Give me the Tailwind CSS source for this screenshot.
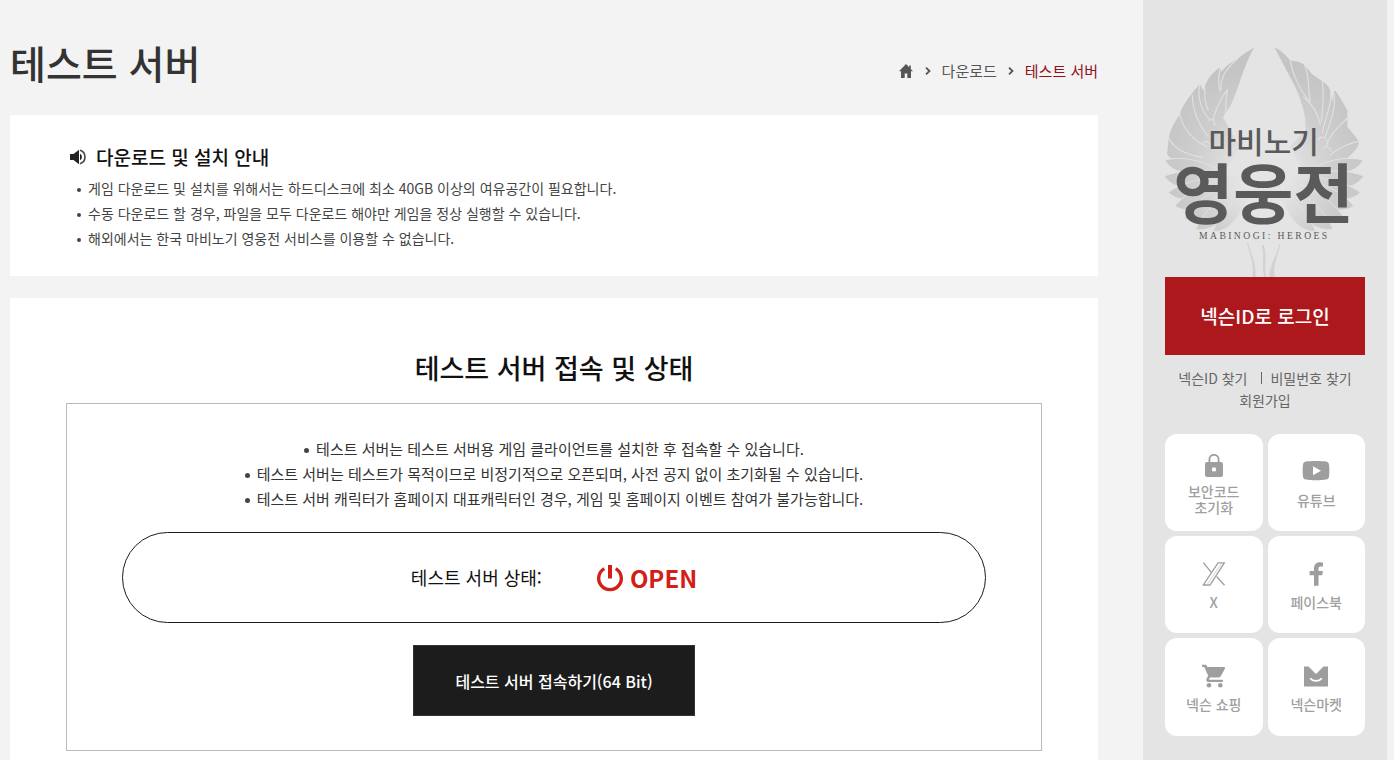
<!DOCTYPE html>
<html lang="ko">
<head>
    <meta charset="UTF-8">
    <meta name="viewport" content="width=device-width, initial-scale=1.0">
    <title>테스트 서버 - 마비노기 영웅전</title>

    <!-- Tailwind CSS -->
    <script src="https://cdn.jsdelivr.net/npm/@tailwindcss/browser@4"></script>
</head>
<body class="flex min-h-screen bg-[#f3f3f3] text-[#333] font-['Noto_Sans_CJK_KR','Noto_Sans',sans-serif]">

    <main class="flex flex-1 flex-col pl-[10px] pr-[45px]">

        <header class="flex items-end justify-between pt-[33px] pb-6">
            <h1 class="text-[39px] leading-[58px] font-medium">테스트 서버</h1>
            <nav aria-label="현재 위치" class="mb-2 flex items-center text-[15px] leading-6 text-[#555]">
                <a href="#" aria-label="홈">
                    <svg class="size-4" viewBox="0 0 16 16" fill="#555"><path d="M8 1 1 8.200h2V15h3.700v-4.500h2.600V15H13V8.200h2L12.800 6V2.500h-1.600v1.800z"/></svg>
                </a>
                <svg class="mx-[11px] h-2 w-[6px]" viewBox="0 0 6 8" fill="none" stroke="#555" stroke-width="1.800"><path d="m1 .7 3.500 3.300L1 7.300"/></svg>
                <a href="#">다운로드</a>
                <svg class="mx-[11px] h-2 w-[6px]" viewBox="0 0 6 8" fill="none" stroke="#555" stroke-width="1.800"><path d="m1 .7 3.500 3.300L1 7.300"/></svg>
                <a href="#" class="text-[#90101c]">테스트 서버</a>
            </nav>
        </header>

        <!-- 설치 안내 -->
        <section class="bg-white px-[60px] pt-[27px] pb-[25px]">
            <h2 class="flex items-center gap-[10px] text-[19px] leading-[30px] font-medium text-[#111]">
                <svg class="size-4" viewBox="0 0 16 16" fill="#222"><path d="M0 5v6h3.500L9 15.200V.8L3.500 5z"/><path d="M10 4.800a3.600 3.600 0 0 1 0 6.400z"/><path d="M10 1.300a7 7 0 0 1 0 13.400" fill="none" stroke="#444" stroke-width="1.600"/></svg>
                다운로드 및 설치 안내
            </h2>
            <ul class="mt-1 pl-[7px] text-[14px] leading-[25px] text-[#444]">
                <li class="flex items-center gap-[7px]"><span class="mt-[2px] size-1 rounded-full bg-[#444]"></span>게임 다운로드 및 설치를 위해서는 하드디스크에 최소 40GB 이상의 여유공간이 필요합니다.</li>
                <li class="flex items-center gap-[7px]"><span class="mt-[2px] size-1 rounded-full bg-[#444]"></span>수동 다운로드 할 경우, 파일을 모두 다운로드 해야만 게임을 정상 실행할 수 있습니다.</li>
                <li class="flex items-center gap-[7px]"><span class="mt-[2px] size-1 rounded-full bg-[#444]"></span>해외에서는 한국 마비노기 영웅전 서비스를 이용할 수 없습니다.</li>
            </ul>
        </section>

        <!-- 서버 상태 -->
        <section class="mt-[22px] flex-1 bg-white px-14 pt-[50px]">
            <h2 class="text-center text-[27px] leading-10 font-medium text-[#111]">테스트 서버 접속 및 상태</h2>
            <div class="mt-[15px] flex flex-col border border-[#bbb] px-[55px] pt-8 pb-[34px]">
                <ul class="text-[15px] leading-[25px]">
                    <li class="flex items-center justify-center gap-[7px]"><span class="mt-1 size-[5px] rounded-full bg-[#444]"></span>테스트 서버는 테스트 서버용 게임 클라이언트를 설치한 후 접속할 수 있습니다.</li>
                    <li class="flex items-center justify-center gap-[7px]"><span class="mt-1 size-[5px] rounded-full bg-[#444]"></span>테스트 서버는 테스트가 목적이므로 비정기적으로 오픈되며, 사전 공지 없이 초기화될 수 있습니다.</li>
                    <li class="flex items-center justify-center gap-[7px]"><span class="mt-1 size-[5px] rounded-full bg-[#444]"></span>테스트 서버 캐릭터가 홈페이지 대표캐릭터인 경우, 게임 및 홈페이지 이벤트 참여가 불가능합니다.</li>
                </ul>
                <div class="mt-[21px] flex h-[91px] items-center justify-center gap-[54px] rounded-full border border-[#1c1c1c]">
                    <p class="text-[18px] text-[#111]">테스트 서버 상태:</p>
                    <p class="flex items-center gap-[6px] text-[24px] font-bold text-[#d32017]">
                        <svg class="size-[28px]" viewBox="0 0 28 28" fill="none" stroke="#d32017" stroke-width="3.400"><path d="M14 1v13.500" stroke-width="4"/><path d="M8.300 4.600a11.300 11.300 0 1 0 11.400 0"/></svg>
                        OPEN
                    </p>
                </div>
                <button type="button" class="mt-[22px] h-[71px] w-[282px] self-center border border-[#333] bg-[#1c1c1c] text-[16px] font-medium text-white">테스트 서버 접속하기(64 Bit)</button>
            </div>
        </section>
    </main>

    <aside class="mr-[7px] w-[244px] shrink-0 bg-[#e4e4e4] px-[22px] pt-[46px]">

        <!-- 로고 -->
        <a href="#" aria-label="마비노기 영웅전">
            <svg class="block h-[231px] w-full font-bold" viewBox="66 48 600 693">
                <defs>
                    <radialGradient id="feather" gradientUnits="userSpaceOnUse" cx="363" cy="440" r="340">
                        <stop offset=".25" stop-color="#e3e3e3"/>
                        <stop offset=".65" stop-color="#cdcdcd"/>
                        <stop offset="1" stop-color="#c4c4c4"/>
                    </radialGradient>
                </defs>
                <g fill="url(#feather)">
                    <path d="M333 53C312 64 298 74 285 86 262 98 245 110 235 126L232 112C205 130 190 150 181 183L171 162C145 190 115 230 110 255 90 280 78 310 76 335L72 372C80 386 100 396 130 404L250 420 290 350 240 262 262 228C290 170 300 110 333 53Z"/>
                    <path d="M394 51C415 62 430 76 441 91 458 93 472 97 484 104L506 131 538 154C552 162 560 172 563 186L568 216 574 180C590 196 600 220 613 240V290L648 334C650 350 630 372 600 394L480 420 440 350 488 300 486 262C478 220 465 185 446 151Z"/>
                </g>
                <g fill="url(#feather)" stroke="#e2e2e2" stroke-width="3">
                    <path d="M66 390c50-12 110-4 200 50-100 0-180-5-200-50Z"/>
                    <path d="M64 438c50-20 110-20 200 0-80 46-170 50-200 0Z"/>
                    <path d="M76 487c40-28 110-50 200-48-60 64-160 92-200 48Z"/>
                    <path d="M96 528c30-40 100-76 190-88-50 80-140 122-190 88Z"/>
                    <path d="M124 566c26-46 90-96 180-116-40 86-120 140-180 116Z"/>
                    <path d="M158 598c20-48 74-106 150-140-30 90-90 150-150 140Z"/>
                    <path d="M210 604c16-40 50-90 110-130-20 80-60 134-110 130Z"/>
                    <path d="M660 390c-50-12-110-4-200 50 100 0 180-5 200-50Z"/>
                    <path d="M662 438c-50-20-110-20-200 0 80 46 170 50 200 0Z"/>
                    <path d="M652 487c-40-28-110-50-200-48 60 64 160 92 200 48Z"/>
                    <path d="M632 528c-30-40-100-76-190-88 50 80 140 122 190 88Z"/>
                    <path d="M604 566c-26-46-90-96-180-116 40 86 120 140 180 116Z"/>
                    <path d="M570 598c-20-48-74-106-150-140 30 90 90 150 150 140Z"/>
                    <path d="M518 604c-16-40-50-90-110-130 20 80 60 134 110 130Z"/>
                </g>
                <g fill="none" stroke="#e0e0e0" stroke-width="3.500">
                    <path d="M285 86C250 115 232 140 234 180M232 112C224 145 226 165 232 184M186 170C183 205 188 225 196 242M171 162C160 205 178 245 202 272M254 178C228 210 218 240 210 270M254 178C246 210 250 235 247 254M148 195C148 240 170 290 196 320M110 252C120 300 155 335 192 350M78 325C90 355 130 375 180 382M196 272C206 262 218 272 214 288M180 340C190 328 204 338 200 352"/>
                    <path d="M441 91C448 130 470 180 498 212M484 104C502 140 494 180 502 217M481 201C508 222 525 250 532 284M538 154C545 200 538 235 535 276M563 186C568 230 545 260 538 310M574 190C578 250 556 290 545 325M613 264C590 290 560 310 550 348M648 334C610 340 580 360 560 376M525 330C532 316 550 320 552 336M540 356C550 346 564 352 564 366"/>
                </g>
                <g fill="#d2d2d2">
                    <path d="M312 640C320 675 334 700 328 741H338C340 700 326 680 316 640Z"/>
                    <path d="M356 645C366 680 354 705 364 741H369C362 705 374 680 362 645Z"/>
                    <path d="M408 642C402 680 380 700 378 741H397C386 715 404 680 412 642Z"/>
                </g>
                <g fill="#5a5a5a" text-anchor="middle">
                    <text x="362" y="369" font-size="90" font-weight="500">마비노기</text>
                    <text x="361" y="564" font-size="196">영웅전</text>
                    <text x="364" y="628" font-size="29" font-weight="400" class="font-['Liberation_Serif',serif] tracking-[0.25em]">MABINOGI: HEROES</text>
                </g>
            </svg>
        </a>

        <button type="button" class="h-[78px] w-full bg-[#ac181c] text-[19px] font-medium text-white">넥슨ID로 로그인</button>

        <div class="mt-3 flex flex-wrap items-center justify-center text-[14px] leading-[22px] text-[#666]">
            <a href="#">넥슨ID 찾기</a>
            <span class="mr-2 ml-[14px] h-3 w-px bg-[#666]"></span>
            <a href="#">비밀번호 찾기</a>
            <a href="#" class="w-full text-center">회원가입</a>
        </div>

        <!-- 바로가기 -->
        <nav aria-label="바로가기" class="mt-[23px] grid grid-cols-2 gap-[5px] text-[14px] font-medium text-[#a0a0a0]">
            <a href="#" class="flex h-[97px] flex-col items-center rounded-xl bg-white pt-5">
                <svg class="size-6" viewBox="0 0 24 24" fill="#9e9e9e"><path fill-rule="evenodd" d="M5 8h14a2 2 0 0 1 2 2v11a2 2 0 0 1-2 2H5a2 2 0 0 1-2-2V10a2 2 0 0 1 2-2zm7 5.200a2.200 2.200 0 1 0 0 4.400 2.200 2.200 0 0 0 0-4.400z"/><path d="M7.400 9V5.400a4.600 4.600 0 0 1 9.200 0V9" fill="none" stroke="#9e9e9e" stroke-width="1.800"/></svg>
                <span class="mt-[5px] text-center leading-4">보안코드<br>초기화</span>
            </a>
            <a href="#" class="flex h-[97px] flex-col items-center rounded-xl bg-white pt-[26px]">
                <svg class="h-6 w-7" viewBox="0 0 28 24" fill="#9e9e9e"><path fill-rule="evenodd" d="M4 1.600C8 .8 20 .8 24 1.600c2 .4 2.800 1.400 3 3 .5 4 .5 8.500 0 12-.2 1.700-1 2.700-3 3-4 .9-16 .9-20 0-2-.3-2.800-1.300-3-3-.5-3.500-.5-8 0-12 .2-1.600 1-2.600 3-3zM11 6.200v9l8-4.500z"/></svg>
                <span class="mt-[6px] leading-5">유튜브</span>
            </a>
            <a href="#" class="flex h-[97px] flex-col items-center rounded-xl bg-white pt-[26px]">
                <svg class="size-6" viewBox="0 0 24 24" fill="none" stroke="#9e9e9e" stroke-width="1.300"><path d="M16 .9h6.300L8 23H1.300z"/><path d="M19.800 1 4.800 23" stroke="#c4c4c4" stroke-width=".8"/><path d="m1.300.7 8 9.600M14.500 14.500l8 8.800"/></svg>
                <span class="mt-[6px] leading-5">X</span>
            </a>
            <a href="#" class="flex h-[97px] flex-col items-center rounded-xl bg-white pt-[26px]">
                <svg class="size-6" viewBox="0 0 24 24" fill="#9e9e9e"><path d="M10 23.700V13.300H5.600V9H10V6.600C10 2.600 12.200.3 15.800.3c1.300 0 2.600.2 3.200.4v3.700h-2.300c-1.600 0-2.200.9-2.200 2.300V9h4.400l-.7 4.300h-3.700v10.400z"/></svg>
                <span class="mt-[6px] leading-5">페이스북</span>
            </a>
            <a href="#" class="flex h-[98px] flex-col items-center rounded-xl bg-white pt-[26px]">
                <svg class="size-6" viewBox="0 0 24 24" fill="#9e9e9e"><path d="M0 .8h4.200L5.300 3h16.600c1 0 1.500.8 1 1.700l-4.200 7.600a2.300 2.300 0 0 1-2 1.200H8l-1.200 2.300h14v2.200H6.500c-1.800 0-2.800-1.700-2-3.200l1.700-3L2.300 3H0z"/><circle cx="7" cy="21.200" r="2.300"/><circle cx="18.300" cy="21.200" r="2.300"/></svg>
                <span class="mt-[6px] leading-5">넥슨 쇼핑</span>
            </a>
            <a href="#" class="flex h-[98px] flex-col items-center rounded-xl bg-white pt-[26px]">
                <svg class="size-6" viewBox="0 0 24 24"><path d="M0 22.500V2.500h4.500L12 10l7.500-7.500H24v20z" fill="#9e9e9e"/><path d="M6.300 14.300c2.400 3.400 9 3.400 11.400 0" fill="none" stroke="#fff" stroke-width="1.700"/></svg>
                <span class="mt-[6px] leading-5">넥슨마켓</span>
            </a>
        </nav>
    </aside>

</body>
</html>
